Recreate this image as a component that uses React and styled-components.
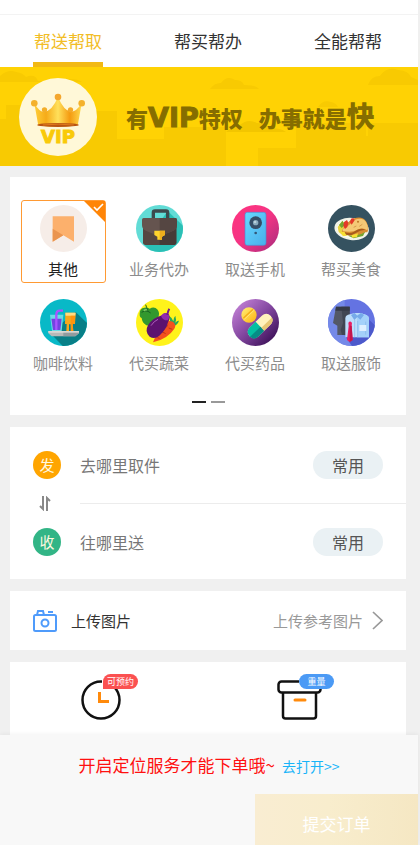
import React, { useState } from "react";
import styled, { createGlobalStyle } from "styled-components";

const GlobalStyle = createGlobalStyle`
  *, *::before, *::after { box-sizing: border-box; }
  body {
    margin: 0;
    background: #f0f0f0;
    font-family: "Noto Sans CJK SC", "Noto Sans", sans-serif;
    color: #333;
  }
  button, input { font: inherit; color: inherit; }
  button { padding: 0; border: 0; background: none; cursor: pointer; }
  svg { display: block; }
`;

const Screen = styled.div`
  display: flex;
  flex-direction: column;
  height: 100vh;
  padding-right: 2px;
  overflow: hidden;
`;

const Header = styled.header`
  flex: none;
  padding-top: 14px;
  background: #fff;
`;

const Tabs = styled.nav`
  display: flex;
  justify-content: space-between;
  height: 53px;
  padding: 0 35px 0 33px;
  border-top: 1px solid #f3f3f3;
`;

const Tab = styled.button`
  width: 70px;
  height: 52px;
  border-top: 5px solid transparent;
  border-bottom: 5px solid ${(p) => (p.$active ? "#f2b914" : "transparent")};
  color: ${(p) => (p.$active ? "#f2bd27" : "#333")};
  font-size: 17px;
  line-height: 42px;
  white-space: nowrap;
`;

const Main = styled.main`
  flex: 1;
  min-height: 0;
  overflow-y: auto;
  scrollbar-width: none;
`;

const Banner = styled.section`
  position: relative;
  display: flex;
  align-items: center;
  height: 99px;
  padding: 0 19px;
  gap: 29px;
  background: #ffd204;
  overflow: hidden;
`;

const Scenery = styled.svg`
  position: absolute;
  inset: 0;
  width: 100%;
  height: 100%;
`;

const VipBadge = styled.div`
  position: relative;
  flex: none;
  display: flex;
  flex-direction: column;
  align-items: center;
  width: 78px;
  height: 78px;
  padding-top: 14px;
  border-radius: 50%;
  background: #fff8d8;
  color: #f9ca09;
  font: 700 18px/20px "DejaVu Sans", sans-serif;
  -webkit-text-stroke: 1px #f9ca09;
`;

const Slogan = styled.p`
  position: relative;
  display: flex;
  align-items: baseline;
  margin: 0;
  gap: 16px;
  color: #866d00;
  font-size: 22px;
  font-weight: 900;
  line-height: 36px;
  white-space: nowrap;
`;

const Large = styled.b`
  font-size: 28px;
  font-weight: 900;
`;

const LargeLatin = styled.b`
  font: 700 27px/36px "DejaVu Sans", sans-serif;
  -webkit-text-stroke: 1px #866d00;
`;

const Stack = styled.div`
  display: flex;
  flex-direction: column;
  gap: 12px;
  padding: 11px 12px 0 10px;
`;

const Card = styled.section`
  background: #fff;
`;

const CategoryGrid = styled.div`
  display: grid;
  grid-template-columns: repeat(4, 1fr);
  justify-items: center;
  row-gap: 11px;
  padding: 23px 7px 0 5px;
`;

const Category = styled.button`
  position: relative;
  display: flex;
  flex-direction: column;
  align-items: center;
  width: 85px;
  height: 83px;
  padding-top: 4px;
  border: 1px solid ${(p) => (p.$selected ? "#ff9a33" : "transparent")};
  border-radius: 3px;
  color: ${(p) => (p.$selected ? "#222" : "#8c8c8c")};
  font-size: 15px;
  line-height: 22px;
  gap: 6px;
`;

const RoundIcon = styled.svg`
  flex: none;
  width: 47px;
  height: 47px;
  border-radius: 50%;
  overflow: hidden;
`;

const Corner = styled.svg`
  position: absolute;
  top: 0;
  right: 0;
`;

const Pager = styled.div`
  display: flex;
  justify-content: center;
  gap: 5px;
  padding: 24px 0 12px;
`;

const PageDot = styled.button`
  width: 14px;
  height: 2px;
  background: ${(p) => (p.$active ? "#222" : "#999")};
`;

const AddressCard = styled(Card)`
  display: grid;
  grid-template-columns: 28px 1fr;
  grid-template-rows: 76px 1px 75px;
  column-gap: 19px;
  padding-left: 23px;
`;

const Marker = styled.label`
  align-self: center;
  height: 28px;
  border-radius: 50%;
  background: ${(p) => p.$color};
  color: #fff8e0;
  font-size: 15px;
  line-height: 27px;
  text-align: center;
`;

const AddressLine = styled.div`
  display: flex;
  align-items: center;
  min-width: 0;
  padding-right: 23px;
`;

const AddressInput = styled.input`
  flex: 1;
  min-width: 0;
  height: 40px;
  padding: 0;
  border: 0;
  outline: 0;
  background: none;
  font-size: 16px;
  &::placeholder { color: #777; opacity: 1; }
`;

const Pill = styled.button`
  width: 70px;
  height: 28px;
  border-radius: 14px;
  background: #eaf1f4;
  color: #555;
  font-size: 16px;
  line-height: 28px;
`;

const Swap = styled.button`
  display: flex;
  align-items: center;
  justify-content: center;
  padding-right: 5px;
  height: 1px;
  overflow: visible;
`;

const SwapIcon = styled.svg`
  flex: none;
`;

const Divider = styled.hr`
  width: 100%;
  height: 1px;
  margin: 0;
  border: 0;
  background: #ececec;
`;

const UploadRow = styled.button`
  display: flex;
  align-items: center;
  width: 100%;
  height: 59px;
  padding: 0 23px;
  background: #fff;
  color: #333;
  font-size: 15px;
`;

const UploadTitle = styled.span`
  margin-left: 14px;
`;

const UploadHint = styled.span`
  margin: 0 9px 0 auto;
  color: #999;
`;

const OptionRow = styled(Card)`
  display: grid;
  grid-template-columns: 1fr 1fr;
  height: 110px;
`;

const Option = styled.button`
  display: flex;
  justify-content: center;
  padding: 18px 16px 0 0;
`;

const OptionIcon = styled.span`
  position: relative;
  width: ${(p) => p.$width};
  height: 42px;
`;

const Tag = styled.span`
  position: absolute;
  top: -6px;
  left: 22px;
  width: 35px;
  height: 15px;
  border-radius: ${(p) => (p.$round ? "8px" : "8px 8px 8px 0")};
  background: ${(p) => p.$color};
  color: #fff;
  font-size: 9px;
  line-height: 15px;
  text-align: center;
  white-space: nowrap;
`;

const Footer = styled.footer`
  position: relative;
  flex: none;
  display: flex;
  flex-direction: column;
  background: #f8f8f8;
  box-shadow: 0 -1px 4px rgba(0, 0, 0, 0.05);
`;

const Notice = styled.p`
  display: flex;
  align-items: baseline;
  justify-content: center;
  height: 59px;
  margin: 0;
  padding-top: 15px;
  gap: 7px;
  color: #ff1010;
  font-size: 17px;
  line-height: 30px;
  white-space: nowrap;
`;

const NoticeLink = styled.a`
  color: #18b4f8;
  font-size: 14px;
  text-decoration: none;
`;

const Submit = styled.button`
  align-self: flex-end;
  width: 39%;
  height: 51px;
  padding-top: 8px;
  background: linear-gradient(90deg, #f9edd2, #f8edcd 45%, #f5e7c3);
  color: #fff;
  font-size: 17px;
  line-height: 40px;
`;

/* Each drawing keeps its own coordinate window; the round frame clips it. */
const categories = [
  {
    name: "其他",
    box: "90 45 141 141",
    art: (
      <>
        <rect x="90" y="45" width="141" height="141" fill="#f6ede8" />
        <path d="M128 79h64v76l-32-19-32 19z" fill="#fcb06c" />
        <path d="M128 116l32 20-32 19z" fill="#ea9550" />
      </>
    ),
  },
  {
    name: "业务代办",
    box: "378 45 141 141",
    art: (
      <>
        <rect x="378" y="45" width="141" height="141" fill="#62dcd6" />
        <path d="M473 63l47 45v80H425l-23-26z" fill="#2bc0b6" />
        <path d="M430 86V68q0-5 5-5h33q5 0 5 5v18" fill="none" stroke="#3c4a4d" strokeWidth="10" />
        <rect x="399" y="98" width="100" height="67" rx="8" fill="#554641" />
        <path d="M449 98h42q8 0 8 8v51q0 8-8 8h-42z" fill="#463b37" />
        <path d="M396 89q0-5 5-5h95q5 0 5 5v16q0 13-13 18l-24 10h-31l-24-10q-13-5-13-18z" fill="#65544f" />
        <path d="M449 84h47q5 0 5 5v16q0 13-13 18l-24 10h-15z" fill="#554642" />
        <path d="M433 122h32v13l-9 5v9h-14v-9l-9-5z" fill="#ffd42e" />
        <path d="M449 122h16v13l-9 5v9h-7z" fill="#edae1d" />
      </>
    ),
  },
  {
    name: "取送手机",
    box: "66 45 141 141",
    art: (
      <>
        <defs>
          <linearGradient id="pink" x2="1" y2="1"><stop stopColor="#ff347f" /><stop offset=".5" stopColor="#f43484" /><stop offset="1" stopColor="#a52c7d" /></linearGradient>
          <linearGradient id="phone" x2="1" y2="1"><stop stopColor="#67d8ff" /><stop offset="1" stopColor="#48afeb" /></linearGradient>
        </defs>
        <rect x="66" y="45" width="141" height="141" fill="url(#pink)" />
        <rect x="105" y="67" width="63" height="99" rx="7" fill="url(#phone)" stroke="#4a8fd4" strokeWidth="2" />
        <circle cx="137" cy="98" r="19" fill="#354e68" />
        <circle cx="137" cy="98" r="8" fill="#8aaabd" />
        <circle cx="135" cy="96" r="4" fill="#bad1dc" />
        <circle cx="137" cy="129" r="4" fill="#315879" />
      </>
    ),
  },
  {
    name: "帮买美食",
    box: "354 45 141 141",
    art: (
      <>
        <rect x="354" y="45" width="141" height="141" fill="#355260" />
        <ellipse cx="425" cy="117" rx="52" ry="33" transform="rotate(7 425 117)" fill="#f1f3e8" />
        <ellipse cx="425" cy="118" rx="44" ry="26" transform="rotate(7 425 118)" fill="#fffdf1" />
        <path d="M383 111l13-17 13 7 14 33-23 4-14-12z" fill="#e9d43f" />
        <path d="M387 105l11-13 6 14-9 8zM414 137l36-6 17-8-8 15-28 7z" fill="#73a52f" />
        <path d="M396 121q17-29 37-36 24-8 36 10 10 19 3 32-10-1-16 4-20 9-46 3-17-2-14-13z" fill="#d98e31" />
        <path d="M398 117q20-9 34-26 24-11 36 5 9 17 4 25-13-10-30-1-18 9-44 3z" fill="#f4c876" />
        <path d="M403 126q17 7 29-1 17-13 34-6-16 1-29 10-16 12-32 4z" fill="#a85b1c" />
        <path d="M402 96l9-6 4 8-3 13-7 6-5-10zM423 86l7-2 4 7-9 13-5-7z" fill="#e43828" />
        <path d="M391 126l12-1 7 12-11 1zM424 136l20-6-3 11-14 2z" fill="#f8df35" />
        <circle cx="444" cy="95" r="3" fill="#ba7625" />
        <path d="M448 109l9-6M431 112l8-4" stroke="#c68436" strokeWidth="2" />
      </>
    ),
  },
  {
    name: "咖啡饮料",
    box: "90 28 141 141",
    art: (
      <>
        <rect x="90" y="28" width="141" height="141" fill="#08b9c7" />
        <path d="M197 67l35 34v70h-72l-40-42z" fill="#087f87" />
        <path d="M120 75h40l-5 49h-29z" fill="#69dce5" />
        <path d="M124 87h31l-4 34h-22z" fill="#7441e1" />
        <path d="M139 121V74q0-11 10-11h10" fill="none" stroke="#a953ff" strokeWidth="7" />
        <path d="M166 69h31l-2 34h-7l2 22h-8v-21h-5v21h-8l1-22h-5z" fill="#f7a71c" />
        <path d="M166 69h31l-1 9h-29z" fill="#ffdb85" />
        <path d="M182 78h14l-2 25h-6l2 22h-7z" fill="#ff940d" />
        <path d="M115 124h92v7l-11 9h-71l-10-9z" fill="#b7b9b8" />
        <path d="M115 124h92v5h-92z" fill="#d8d8d4" />
        <path d="M160 129h47l-11 11h-36z" fill="#909c9f" />
      </>
    ),
  },
  {
    name: "代买蔬菜",
    box: "378 28 141 141",
    art: (
      <>
        <rect x="378" y="28" width="141" height="141" fill="#fff31b" />
        <path d="M389 72q0-17 14-18 8-2 16 3 14-8 24 3 9 13-1 28-13 21-33 19-13-8-14-22-7-3-6-13z" fill="#32982e" />
        <path d="M395 68q9-8 19-3l8 5M414 62q-5-9-7-17" fill="none" stroke="#185f23" strokeWidth="3" />
        <path d="M401 63q6-4 10-2" stroke="#85ca69" strokeWidth="4" fill="none" />
        <path d="M480 102q0-18-3-24 11 7 13 17 1-12 6-17 4 12 0 21 6-7 11-6-3 12-18 17z" fill="#29a75d" />
        <path d="M467 98q10-8 23-1 10 10 3 20-19 30-64 41 11-28 38-60z" fill="#f4511e" />
        <path d="M457 109l11 4M450 121l10 8M467 132l-9-5M473 105l-4 8M487 119l-11-4M442 144l7 2" stroke="#bd3519" strokeWidth="3" />
        <path d="M456 77q10-12 20-3 7 9-2 24-5 22-26 40-14 12-29 3-16-15-5-34 13-22 42-30z" fill="#5d126f" />
        <path d="M453 78q9-13 22-5 5 7-1 19-16 1-21-14z" fill="#922baf" />
        <path d="M472 76q1-11 6-19" stroke="#731b8b" strokeWidth="6" />
        <path d="M423 108q9-14 21-19" stroke="#ad5ebc" strokeWidth="3" fill="none" />
      </>
    ),
  },
  {
    name: "代买药品",
    box: "66 28 141 141",
    art: (
      <>
        <defs>
          <linearGradient id="violet" x2="1" y2="1"><stop offset=".05" stopColor="#c886da" /><stop offset=".5" stopColor="#82469f" /><stop offset=".95" stopColor="#32094e" /></linearGradient>
          <linearGradient id="tablet" x2="1" y2="1"><stop stopColor="#fff178" /><stop offset="1" stopColor="#ffb20d" /></linearGradient>
        </defs>
        <rect x="66" y="28" width="141" height="141" fill="url(#violet)" />
        <circle cx="117" cy="76" r="23" fill="url(#tablet)" />
        <path d="M100 86l29-27" stroke="#f4ad18" strokeWidth="4" />
        <path d="M103 89l29-27" stroke="#fff092" strokeWidth="2" />
        <g transform="rotate(-44 150 110)">
          <rect x="107" y="91" width="88" height="37" rx="18" fill="#fff2bc" />
          <path d="M125 91h25v37h-25q-18 0-18-18t18-19z" fill="#05bfa2" />
          <path d="M107 112h43v16h-25q-16 0-18-16z" fill="#078c86" />
          <path d="M150 116h44q-2 12-18 12h-26z" fill="#e8c775" />
        </g>
      </>
    ),
  },
  {
    name: "取送服饰",
    box: "354 28 141 141",
    art: (
      <>
        <rect x="354" y="28" width="141" height="141" fill="#6473e2" />
        <path d="M354 28h50v110l31 31h-81z" fill="#7489e8" />
        <path d="M475 88l21 20v61h-70l-19-27z" fill="#4c59cb" />
        <path d="M378 51h41v85h-37V108l-13-8z" fill="#535866" />
        <path d="M394 51h25v85h-23l-4-15 7-22z" fill="#404653" />
        <path d="M378 51h41v12h-43z" fill="#353a47" />
        <path d="M406 143V85q0-8 8-10l20-5h17l18 6q8 3 8 11v56z" fill="#bdddfb" />
        <path d="M441 76l10-6 18 6q8 3 8 11v56h-35z" fill="#a4d1fa" />
        <path d="M423 76l11-6 8 8 11-8 9 6-11 14-9-8-9 9z" fill="#76aae9" />
        <path d="M434 91v52M443 94v49M467 96v39" stroke="#85b7e8" strokeWidth="2" />
        <rect x="448" y="106" width="21" height="18" fill="#deefff" />
        <path d="M415 99l5-4 6 4-1 9 3 43-9 6-8-6 5-42z" fill="#e91e63" />
        <path d="M419 108h6l3 43-9 6z" fill="#c4164b" />
      </>
    ),
  },
];

function Crown() {
  return (
    <svg width="54" height="35" viewBox="92 78 164 106" aria-hidden="true">
      <defs>
        <linearGradient id="gold"><stop stopColor="#ffcf3a" /><stop offset=".25" stopColor="#f6ab18" /><stop offset=".5" stopColor="#ffe05b" /><stop offset=".75" stopColor="#f49a10" /><stop offset="1" stopColor="#ffdc50" /></linearGradient>
      </defs>
      <path d="M102 112q18 30 31 25 22 0 41-44 18 42 38 44 15 4 34-25l-12 67q-60 10-120 0z" fill="url(#gold)" />
      <circle cx="102" cy="112" r="10" fill="#f4b12c" />
      <circle cx="133" cy="132" r="8" fill="#f3ae2a" />
      <circle cx="174" cy="93" r="10" fill="#f4a72e" />
      <circle cx="212" cy="132" r="8" fill="#f3a92a" />
      <circle cx="246" cy="112" r="10" fill="#f4b12c" />
      <ellipse cx="174" cy="178" rx="63" ry="6" fill="#b95413" />
      <path d="M128 178q46-5 94 0" fill="none" stroke="#df7a1c" strokeWidth="3" />
    </svg>
  );
}

function BannerScenery() {
  return (
    <Scenery viewBox="0 0 418 99" preserveAspectRatio="none" aria-hidden="true">
      <path d="M0 52h6V38h14v6h97v28h47V60h62v39H0zM258 99V81h38V56h122v43z" fill="#f8ca02" />
      <path d="M0 15V9q8-7 16-4 7 1 10 5 9-4 12 4 5 0 6 1zM56 15q6-4 14-3 8 0 12 3zM210 22q4-6 11-6 6-8 14-3 7 0 9 5 12 0 15 4zM368 18q3-9 12-9 7-10 18-6 11 1 13 7l7 3v5zM318 40q5-8 13-5 5 1 7 5z" fill="#f8ca02" />
      <path d="M226 65q8-8 14-7 8-7 17-2 8 0 12 5 12 0 17 4z" fill="#f3c600" />
      <path d="M367 57v12" stroke="#ffd204" strokeWidth="2" />
    </Scenery>
  );
}

export default function App() {
  const [tab, setTab] = useState(0);
  const [selected, setSelected] = useState(0);
  const [page, setPage] = useState(0);

  return (
    <>
      <GlobalStyle />
      <Screen>
        <Header>
          <Tabs>
            {["帮送帮取", "帮买帮办", "全能帮帮"].map((name, i) => (
              <Tab key={name} $active={tab === i} onClick={() => setTab(i)}>{name}</Tab>
            ))}
          </Tabs>
        </Header>

        <Main>
          <Banner>
            <BannerScenery />
            <VipBadge><Crown />VIP</VipBadge>
            <Slogan>
              <span>有<LargeLatin>VIP</LargeLatin>特权</span>
              <span>办事就是<Large>快</Large></span>
            </Slogan>
          </Banner>

          <Stack>
            <Card>
              <CategoryGrid>
                {categories.map((item, i) => (
                  <Category key={item.name} $selected={selected === i} aria-pressed={selected === i} onClick={() => setSelected(i)}>
                    <RoundIcon viewBox={item.box} aria-hidden="true">{item.art}</RoundIcon>
                    {item.name}
                    {selected === i && (
                      <Corner width="21" height="21" viewBox="0 0 21 21" aria-hidden="true">
                        <path d="M0 0h21v21z" fill="#ff8507" />
                        <path d="M10 6l3 3 6-6" fill="none" stroke="#fff" strokeWidth="1.6" />
                      </Corner>
                    )}
                  </Category>
                ))}
              </CategoryGrid>
              <Pager>
                {[0, 1].map((n) => (
                  <PageDot key={n} $active={page === n} aria-label={`${n + 1}`} onClick={() => setPage(n)} />
                ))}
              </Pager>
            </Card>

            <AddressCard>
              <Marker htmlFor="pickup" $color="#ffa500">发</Marker>
              <AddressLine>
                <AddressInput id="pickup" placeholder="去哪里取件" />
                <Pill>常用</Pill>
              </AddressLine>
              <Swap aria-label="交换">
                <SwapIcon width="12" height="15" viewBox="0 0 12 15" fill="none" stroke="#888" strokeWidth="2">
                  <path d="M4 0v13L1 10M8 15V2l3 3" />
                </SwapIcon>
              </Swap>
              <Divider />
              <Marker htmlFor="dropoff" $color="#32b586">收</Marker>
              <AddressLine>
                <AddressInput id="dropoff" placeholder="往哪里送" />
                <Pill>常用</Pill>
              </AddressLine>
            </AddressCard>

            <UploadRow>
              <svg width="24" height="22" viewBox="0 0 24 22" fill="none" stroke="#4f9bfb" strokeWidth="2" aria-hidden="true">
                <rect x="1" y="5" width="22" height="16" rx="1.5" />
                <path d="M4 5l1-4h5l1 4M15 2h5" />
                <circle cx="12" cy="13" r="3.5" />
              </svg>
              <UploadTitle>上传图片</UploadTitle>
              <UploadHint>上传参考图片</UploadHint>
              <svg width="11" height="19" viewBox="0 0 11 19" fill="none" stroke="#999" strokeWidth="1.7" aria-hidden="true">
                <path d="M1 1l9 8.5L1 18" />
              </svg>
            </UploadRow>

            <OptionRow>
              <Option>
                <OptionIcon $width="40px">
                  <svg width="40" height="40" viewBox="0 0 40 40" fill="none" aria-hidden="true">
                    <circle cx="20" cy="20" r="18.5" stroke="#111" strokeWidth="2.5" />
                    <path d="M18.5 12v9.5h9.5" stroke="#ff8a0c" strokeWidth="3" />
                    <path d="M21 0h19v8H34l-1 1H21z" fill="#fff" />
                  </svg>
                  <Tag $color="#fb5151">可预约</Tag>
                </OptionIcon>
              </Option>
              <Option>
                <OptionIcon $width="44px">
                  <svg width="45" height="40" viewBox="0 0 45 40" fill="none" stroke="#111" strokeWidth="2.5" aria-hidden="true">
                    <path d="M6 12v24q0 2.5 2.5 2.5h28q2.5 0 2.5-2.5V12" />
                    <rect x="1.5" y="1.5" width="42" height="11" rx="3" />
                    <path d="M18 20h10" stroke="#ff8a0c" strokeWidth="3" strokeLinecap="round" />
                    <path d="M22 0h23v9H22z" fill="#fff" stroke="none" />
                  </svg>
                  <Tag $round $color="#4b9af5">重量</Tag>
                </OptionIcon>
              </Option>
            </OptionRow>
          </Stack>
        </Main>

        <Footer>
          <Notice>
            开启定位服务才能下单哦~
            <NoticeLink href="#location">去打开&gt;&gt;</NoticeLink>
          </Notice>
          <Submit>提交订单</Submit>
        </Footer>
      </Screen>
    </>
  );
}
